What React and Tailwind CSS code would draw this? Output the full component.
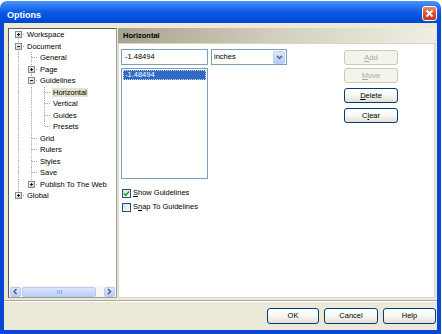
import React from "react";

const rows = [
  { t: "Workspace", l: 0, anc: [], up: false, down: true, box: "plus" },
  { t: "Document", l: 0, anc: [], up: true, down: true, box: "minus" },
  { t: "General", l: 1, anc: [true], up: true, down: true },
  { t: "Page", l: 1, anc: [true], up: true, down: true, box: "plus" },
  { t: "Guidelines", l: 1, anc: [true], up: true, down: true, box: "minus" },
  { t: "Horizontal", l: 2, anc: [true, true], up: true, down: true, sel: true },
  { t: "Vertical", l: 2, anc: [true, true], up: true, down: true },
  { t: "Guides", l: 2, anc: [true, true], up: true, down: true },
  { t: "Presets", l: 2, anc: [true, true], up: true, down: false },
  { t: "Grid", l: 1, anc: [true], up: true, down: true },
  { t: "Rulers", l: 1, anc: [true], up: true, down: true },
  { t: "Styles", l: 1, anc: [true], up: true, down: true },
  { t: "Save", l: 1, anc: [true], up: true, down: true },
  { t: "Publish To The Web", l: 1, anc: [true], up: true, down: false, box: "plus" },
  { t: "Global", l: 0, anc: [], up: true, down: false, box: "plus" },
];

const LINE = "#a5a5a5";

function Cell({ up, down, right, box }) {
  return (
    <svg width="13" height="11.5" viewBox="0 0 13 11.5" className="block shrink-0">
      {up && <line x1="6.5" y1="0" x2="6.5" y2="5.5" stroke={LINE} strokeDasharray="1 1" />}
      {down && <line x1="6.5" y1="5.5" x2="6.5" y2="11.5" stroke={LINE} strokeDasharray="1 1" />}
      {right && <line x1="7" y1="5.5" x2="13" y2="5.5" stroke={LINE} strokeDasharray="1 1" />}
      {box && (
        <g>
          <rect x="3" y="2" width="7" height="7" fill="#ffffff" stroke="none" />
          <rect x="3.5" y="2.5" width="6" height="6" fill="url(#bx)" stroke="#7d8ea3" />
          <line x1="5" y1="5.5" x2="8" y2="5.5" stroke="#1e1e1e" />
          {box === "plus" && <line x1="6.5" y1="4" x2="6.5" y2="7" stroke="#1e1e1e" />}
        </g>
      )}
    </svg>
  );
}

function TreeRow({ r }) {
  return (
    <div className="flex items-center h-[11.5px] pl-[3px]">
      {r.anc.map((a, i) => (
        <Cell key={i} up={a} down={a} />
      ))}
      <Cell up={r.up} down={r.down} right box={r.box} />
      <span
        className={
          "ml-[1px] px-[1px] leading-[9px] text-[7.5px] whitespace-nowrap text-black " +
          (r.sel ? "bg-[#e3e0cd]" : "")
        }
      >
        {r.t}
      </span>
    </div>
  );
}

function Chev({ dir }) {
  const d = dir === "left" ? "M4.5 1 L2 3.5 L4.5 6" : dir === "right" ? "M2 1 L4.5 3.5 L2 6" : "M1 2 L3.5 4.5 L6 2";
  return (
    <svg width="7" height="7" viewBox="0 0 7 7" className="block">
      <path d={d} stroke="#4d6185" strokeWidth="1.5" fill="none" />
    </svg>
  );
}

function Btn({ children, disabled, w, cls = "" }) {
  return (
    <div
      className={
        "h-[15px] rounded-[3px] border flex items-center justify-center text-[7.5px] leading-none " +
        (disabled
          ? "border-[#cac8bb] bg-[#f5f4ea] text-[#aca899] "
          : "border-[#003c74] bg-gradient-to-b from-white via-[#f7f7f3] to-[#e3e0d4] text-black ") +
        w +
        " " +
        cls
      }
    >
      {children}
    </div>
  );
}

function Check({ checked }) {
  return (
    <div className="w-[9px] h-[9px] border border-[#1c5180] bg-gradient-to-br from-[#dcdcd7] to-white flex items-center justify-center">
      {checked && (
        <svg width="7" height="7" viewBox="0 0 7 7" className="block">
          <path d="M1 3.3 L2.8 5.2 L6 1.5" stroke="#21a121" strokeWidth="1.6" fill="none" />
        </svg>
      )}
    </div>
  );
}

export default function App() {
  return (
    <div className="w-[442px] h-[334px] bg-white overflow-hidden font-['Liberation_Sans',Arial,sans-serif]">
      <svg width="0" height="0" className="absolute">
        <defs>
          <linearGradient id="bx" x1="0" y1="0" x2="1" y2="1">
            <stop offset="0" stopColor="#ffffff" />
            <stop offset="1" stopColor="#c6c2b1" />
          </linearGradient>
        </defs>
      </svg>
      <div className="w-[441px] h-[334px] pt-[1px] flex flex-col">
        {/* Title bar */}
        <div className="h-[22px] shrink-0 rounded-t-[7px] bg-gradient-to-b from-[#4a94fb] via-[#0a5ae6] to-[#0046d4] flex items-start pl-[7px] pr-[4px]">
          <span className="mt-[10px] text-white font-bold text-[9px] leading-[9px]">Options</span>
          <div className="ml-auto mt-[5px] w-[15px] h-[15px] rounded-[3px] border border-white bg-gradient-to-b from-[#e98a6c] via-[#d9532f] to-[#c03a1a] flex items-center justify-center">
            <svg width="9" height="9" viewBox="0 0 9 9" className="block">
              <path d="M1.5 1.5 L7.5 7.5 M7.5 1.5 L1.5 7.5" stroke="#ffffff" strokeWidth="1.8" />
            </svg>
          </div>
        </div>

        {/* Body */}
        <div className="flex-1 bg-[#ece9d8] border-x-[4px] border-b-[4px] border-[#0846d8] flex flex-col">
          <div className="pt-[5px] pl-[4px] flex h-[275px]">
            {/* Tree */}
            <div className="w-[109px] h-[270px] bg-white border border-t-[#5a5a5a] border-l-[#5a5a5a] border-r-[#9a9a9a] border-b-[#9a9a9a] flex flex-col">
              <div className="flex-1 overflow-hidden">
                {rows.map((r, i) => (
                  <TreeRow key={i} r={r} />
                ))}
              </div>
              <div className="h-[11px] flex items-center pl-[1px] pr-[1px] bg-[#f7f6f0] mb-[0px]">
                <div className="w-[11px] h-[10px] rounded-[2px] border border-[#b7cbf5] bg-gradient-to-b from-[#dde7fe] to-[#b7ccf8] flex items-center justify-center">
                  <Chev dir="left" />
                </div>
                <div className="ml-[1px] w-[74px] h-[10px] rounded-[2px] border border-[#b7cbf5] bg-gradient-to-b from-[#dbe6fe] to-[#bcd0f9] flex items-center justify-center gap-[1px]">
                  <div className="w-[1px] h-[4px] bg-[#8eaaf0]" />
                  <div className="w-[1px] h-[4px] bg-[#8eaaf0]" />
                  <div className="w-[1px] h-[4px] bg-[#8eaaf0]" />
                </div>
                <div className="ml-auto w-[11px] h-[10px] rounded-[2px] border border-[#b7cbf5] bg-gradient-to-b from-[#dde7fe] to-[#b7ccf8] flex items-center justify-center">
                  <Chev dir="right" />
                </div>
              </div>
            </div>

            {/* Panel */}
            <div className="ml-[1px] w-[317px] h-[270px] flex flex-col">
              <div className="h-[15px] shrink-0 bg-gradient-to-r from-[#a6a28e] via-[#d3cfbc] to-[#f1efe4] flex items-center pl-[5px]">
                <span className="font-bold text-[7.5px] leading-none text-black">Horizontal</span>
              </div>
              <div className="flex-1 bg-white border border-[#d8d5c6] pt-[5px] pl-[2px] flex">
                <div className="flex flex-col">
                  <div className="flex gap-[3px] h-[16px]">
                    <div className="w-[87px] h-[16px] border border-[#7f9db9] bg-white flex items-center pl-[3px] text-[7.5px] leading-none">
                      -1.48494
                    </div>
                    <div className="w-[76px] h-[16px] border border-[#7f9db9] bg-white flex items-center pl-[2px] pr-[1px] text-[7.5px] leading-none">
                      <span>inches</span>
                      <div className="ml-auto w-[12px] h-[13px] rounded-[2px] border border-[#bad0f9] bg-gradient-to-b from-[#dfe8fe] to-[#b4c9f7] flex items-center justify-center">
                        <Chev dir="down" />
                      </div>
                    </div>
                  </div>
                  <div className="mt-[3px] w-[87px] h-[111px] border border-[#7f9db9] bg-white pt-[1px] px-[1px]">
                    <div className="h-[10px] bg-[#316ac5] border border-dotted border-[#c9d7ef] text-white text-[7.5px] leading-none flex items-center pl-[1px]">
                      -1.48494
                    </div>
                  </div>
                  <div className="mt-[9px] flex items-center gap-[2px] pl-[1px] h-[10px]">
                    <Check checked />
                    <span className="text-[7.5px] leading-none">
                      <u>S</u>how Guidelines
                    </span>
                  </div>
                  <div className="mt-[4px] flex items-center gap-[2px] pl-[1px] h-[10px]">
                    <Check />
                    <span className="text-[7.5px] leading-none">
                      S<u>n</u>ap To Guidelines
                    </span>
                  </div>
                </div>
                <div className="ml-[57px] pt-[1px] flex flex-col">
                  <Btn disabled w="w-[54px]">
                    <span>
                      <u>A</u>dd
                    </span>
                  </Btn>
                  <Btn disabled w="w-[54px]" cls="mt-[3px]">
                    <span>
                      <u>M</u>ove
                    </span>
                  </Btn>
                  <Btn w="w-[54px]" cls="mt-[5px]">
                    <span>
                      <u>D</u>elete
                    </span>
                  </Btn>
                  <Btn w="w-[54px]" cls="mt-[5px]">
                    <span>
                      C<u>l</u>ear
                    </span>
                  </Btn>
                </div>
              </div>
            </div>
          </div>

          {/* Separator */}
          <div className="mt-[2px] h-[2px] border-t border-t-[#aca899] border-b border-b-white" />

          {/* Bottom buttons */}
          <div className="mt-[6px] flex justify-end gap-[5px] pr-[1px]">
            <Btn w="w-[52px] h-[16px]">OK</Btn>
            <Btn w="w-[54px] h-[16px]">Cancel</Btn>
            <Btn w="w-[53px] h-[16px]">Help</Btn>
          </div>
        </div>
      </div>
    </div>
  );
}
